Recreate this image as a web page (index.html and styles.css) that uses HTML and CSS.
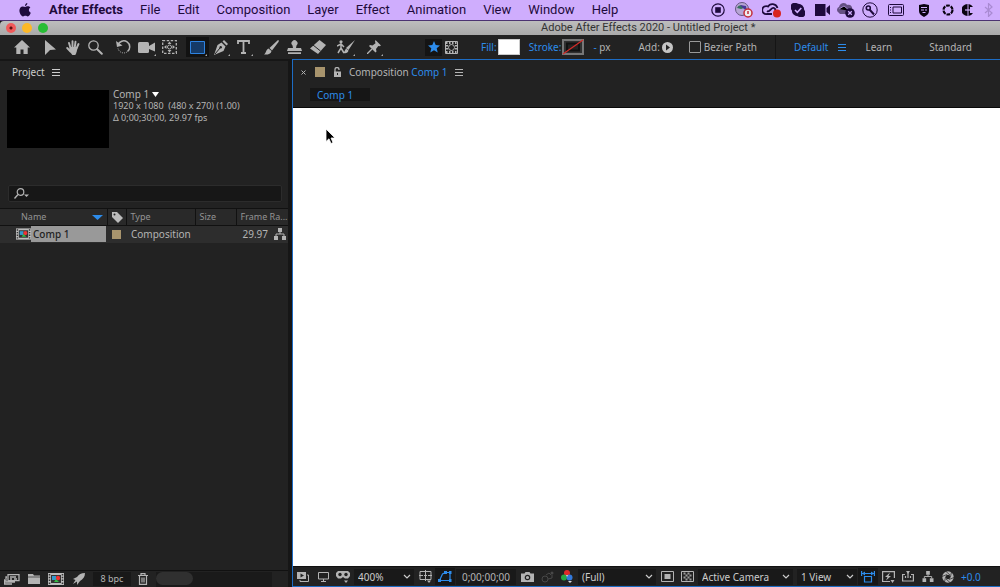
FILE: index.html
```html
<!DOCTYPE html>
<html lang="en">
<head>
<meta charset="utf-8">
<title>Adobe After Effects 2020 - Untitled Project</title>
<link rel="stylesheet" href="styles.css">
</head>
<body>
<svg class="defs" aria-hidden="true">
  <symbol id="film" viewBox="0 0 16 12"><path fill="#bbb" d="M0 0h16v12H0z"/><path fill="#333" d="M3 2h10v8H3z"/><path stroke="#333" stroke-width="1.5" stroke-dasharray="1.5 1.3" d="M1.5 1v10M14.500 1v10"/><path fill="#39c" d="M4 3h4v4H4z"/><circle cx="10" cy="5" r="2.200" fill="#e33"/><path fill="#3b4" d="M6 9l2-3 3 3z"/></symbol>
  <symbol id="tree" viewBox="0 0 12 12"><path fill="currentColor" d="M4 0h4v4H4zM0 8h4v4H0zM8 8h4v4H8z"/><path fill="none" stroke="currentColor" d="M6 4v2M2 8V6h8v2"/></symbol>
  <symbol id="chevron" viewBox="0 0 8 5"><path fill="none" stroke="currentColor" stroke-width="1.200" d="M1 1l3 3 3-3"/></symbol>
  <symbol id="menu" viewBox="0 0 8 7"><path stroke="currentColor" d="M0 .5h8M0 3.500h8M0 6.500h8"/></symbol>
</svg>

<header class="menubar">
  <svg class="apple" viewBox="0 0 12 14"><path fill="currentColor" d="M8.300 0c.1 1.600-1 2.900-2.300 3C5.900 1.500 7 .2 8.300 0zM6.200 3.900c.6 0 1.400-.7 2.600-.7 1 0 2 .5 2.600 1.400-2.200 1.300-1.900 4.200.4 5.100-.6 1.700-1.700 3.700-3 3.700-.9 0-1.300-.6-2.400-.6s-1.500.6-2.400.6C2.400 13.400.4 10.400.4 7.600.4 4.900 2.100 3.400 3.700 3.400c1.100 0 1.900.5 2.500.5z"/></svg>
  <nav class="menus">
    <button class="menu menu-app">After Effects</button><button class="menu">File</button><button class="menu">Edit</button><button class="menu">Composition</button><button class="menu">Layer</button><button class="menu">Effect</button><button class="menu">Animation</button><button class="menu">View</button><button class="menu">Window</button><button class="menu">Help</button>
  </nav>
  <div class="status">
    <span class="st"><svg width="14" height="14" viewBox="0 0 14 14"><circle cx="7" cy="7" r="6.200" fill="none" stroke="currentColor" stroke-width="1.200"/><path fill="currentColor" d="M4.200 4.200h5.600v5.600H4.200z"/></svg></span>
    <span class="st st-l"><svg width="20" height="16" viewBox="0 0 20 16"><circle cx="8" cy="7" r="6.500" fill="#b7a5d5" stroke="#64567f"/><path fill="#38705f" d="M3 6c2-4 6-3 7 0l-3 1z"/><path fill="#47349a" d="M6 3l6 1 1 5-3-2z"/><circle cx="14" cy="11" r="4" fill="#eee" stroke="#c22d3a" stroke-width="1.500"/><path stroke="#c22d3a" stroke-width="1.500" d="M14 9v3"/></svg></span>
    <span class="st st-l"><svg width="20" height="16" viewBox="0 0 20 16"><path fill="none" stroke="currentColor" stroke-width="1.800" d="M10 12H5a4 4 0 1 1 1-7.500C8 1 14 1 15.500 6M5 9c3 2 4-4 7-3 2 1 2 4 0 5"/><circle cx="15" cy="11.500" r="4" fill="#d8231f"/></svg></span>
    <span class="st"><svg width="14" height="14" viewBox="0 0 14 14"><path fill="currentColor" d="M4 0a4 4 0 0 1 3 .8A6 6 0 0 1 13.200 7 4 4 0 0 1 7 13.200 6 6 0 0 1 .8 7 4 4 0 0 1 4 0z"/><path fill="none" stroke="#cfadfd" stroke-width="1.600" d="M4 7l2.300 2.300L10.300 5"/></svg></span>
    <span class="st"><svg width="15" height="12" viewBox="0 0 15 12"><path fill="currentColor" d="M0 0h10.500v12H0zM11.500 4L15 1v10l-3.500-3z"/></svg></span>
    <span class="st"><svg width="18" height="16" viewBox="0 0 18 16"><path fill="#655083" d="M1 10a3 3 0 0 1 1-5C3 0 9 0 10 3c4-1 6 2 5 6l-5 3H3z"/><path stroke="#a186cb" d="M2 7l5-3 6 5"/><circle cx="13" cy="11" r="4.800" fill="#1e0a3c"/><path stroke="#cfadfd" stroke-width="1.300" d="M11.200 9.200l3.600 3.600M14.800 9.200l-3.600 3.600"/></svg></span>
    <span class="st"><svg width="16" height="16" viewBox="0 0 16 16"><circle cx="8" cy="8" r="7.200" fill="none" stroke="currentColor"/><circle cx="6.300" cy="6" r="2" fill="none" stroke="currentColor" stroke-width="1.600"/><path stroke="currentColor" stroke-width="2" d="M7.500 7.500l4.500 5"/></svg></span>
    <span class="st st-l"><svg width="16" height="12" viewBox="0 0 16 12"><rect x=".5" y=".5" width="15" height="11" rx="1" fill="none" stroke="currentColor"/><path fill="none" stroke="currentColor" d="M5 3h8.500v6H5zM2.500 3v1M2.500 5.500v1M2.500 8v1"/></svg></span>
    <span class="st st-l"><svg width="12" height="13" viewBox="0 0 12 13"><path fill="#0a0310" d="M1 1l5-1 5 1v6c0 3-2 4.500-5 6-3-1.500-5-3-5-6z"/><path stroke="#cfadfd" d="M3 3.500h6M3 6h3M7 6h2M4.500 8.500h3"/></svg></span>
    <span class="st st-s"><svg width="12" height="12" viewBox="0 0 12 12"><circle cx="6" cy="6" r="4.500" fill="none" stroke="#0a0310" stroke-width="2.200" stroke-dasharray="3.700 1"/></svg></span>
    <span class="st st-s"><svg width="12" height="12" viewBox="0 0 12 12"><path fill="#0a0310" d="M5.500 0v12A6 6 0 0 1 5.500 0zM6.500 0A6 6 0 0 1 11 3H8v6h3a6 6 0 0 1-4.500 3z"/><path stroke="#cfadfd" stroke-width="1.200" d="M3 6h6"/></svg></span>
    <span class="st st-s"><svg width="9" height="14" viewBox="0 0 9 14"><path fill="none" stroke="#a98ad2" stroke-width="1.200" d="M1 4l7 6-3.500 3.500V.5L8 4l-7 6"/></svg></span>
  </div>
</header>

<div class="titlebar">
  <div class="lights"><button class="light red" aria-label="Close"></button><button class="light yellow" aria-label="Minimize"></button><button class="light green" aria-label="Zoom"></button></div>
  <div class="title">Adobe After Effects 2020 - Untitled Project *</div>
</div>

<div class="toolbar">
  <div class="tools">
    <button class="tool" aria-label="Home"><svg width="16" height="14" viewBox="0 0 16 14"><path fill="currentColor" d="M8 0l8 7.500h-2.300V14H9.500V9.500h-3V14H2.300V7.500H0z"/></svg></button>
  </div>
  <div class="tools">
    <button class="tool" aria-label="Selection"><svg width="12" height="15" viewBox="0 0 12 15"><path fill="currentColor" d="M1 0l11 9.500-6 .5-5 5z"/></svg></button>
    <button class="tool" aria-label="Hand"><svg width="14" height="15" viewBox="0 0 14 15"><path fill="none" stroke="currentColor" stroke-width="1.900" stroke-linecap="round" d="M4.500 8L3 3M6.500 7V1.200M8.800 7l.7-5.200M10.500 8.500L12.500 4M4.500 11.500L1.200 8"/><path fill="currentColor" d="M3.800 7h7.500c0 3.500-.8 6-2 8h-3L3 10.500z"/></svg></button>
    <button class="tool" aria-label="Magnify"><svg width="15" height="15" viewBox="0 0 15 15"><circle cx="5.500" cy="5.500" r="4.700" fill="none" stroke="currentColor" stroke-width="1.300"/><path stroke="currentColor" stroke-width="2" stroke-linecap="round" d="M9.200 9.200l4.600 4.600"/></svg></button>
  </div>
  <div class="tools">
    <button class="tool" aria-label="Rotate"><svg width="15" height="14" viewBox="0 0 15 14"><path fill="none" stroke="currentColor" stroke-width="1.500" d="M2 5a6 6 0 1 1 9.500 6.500"/><path fill="none" stroke="currentColor" stroke-dasharray="1 1" d="M2 8.500a6 6 0 0 0 9 3.500"/><path fill="currentColor" d="M0 1l1 6 5.500-1.500z"/></svg></button>
    <button class="tool more" aria-label="Camera"><svg width="17" height="11" viewBox="0 0 17 11"><rect width="11" height="11" rx="1.500" fill="currentColor"/><path fill="currentColor" d="M11 4l6-3.500v9L11 7z"/></svg></button>
    <button class="tool" aria-label="Pan behind"><svg width="15" height="14" viewBox="0 0 15 14"><path fill="none" stroke="currentColor" stroke-width="1.300" stroke-dasharray="2.500 1.500" d="M.7.700h13.600v12.600H.7z"/><circle cx="7.500" cy="7" r="2" fill="none" stroke="currentColor"/><path fill="currentColor" d="M7.500 1.500l2 2.500h-4zM7.500 12.500l2-2.500h-4zM2 7l2.500-2v4zM13 7l-2.500-2v4z"/></svg></button>
  </div>
  <div class="tools">
    <button class="tool more active" aria-label="Rectangle"><svg width="15" height="13" viewBox="0 0 15 13"><path fill="#153a67" stroke="#2d82e0" d="M.5.5h14v12H.5z"/></svg></button>
    <button class="tool more" aria-label="Pen"><svg width="14" height="15" viewBox="0 0 14 15"><path fill="currentColor" d="M8.500 1.500L10 0l4 4-1.500 1.500zM7.500 2.500l4 4L9.500 11 0 15 3.500 5z"/><path stroke="#222" d="M1 14l5-6"/><circle cx="6.700" cy="7.300" r="1.200" fill="#222"/></svg></button>
    <button class="tool more" aria-label="Type"><svg width="13" height="14" viewBox="0 0 13 14"><path fill="none" stroke="currentColor" stroke-width="1.800" d="M1 4V1h11v3M6.500 1v12M4 13h5"/></svg></button>
  </div>
  <div class="tools">
    <button class="tool" aria-label="Brush"><svg width="15" height="15" viewBox="0 0 15 15"><path fill="currentColor" d="M14 0c1 0 1 1 .5 2L8 10.500 5.500 8zM4.500 8.500L7.500 11c-.5 3-4 4-7.500 3.500 2-1 2-5 4.500-6z"/></svg></button>
    <button class="tool" aria-label="Clone stamp"><svg width="15" height="14" viewBox="0 0 15 14"><path fill="currentColor" d="M5.500 5.500a3 3 0 1 1 4 0L9 8h5l1 3H0l1-3h5zM1 12.300h13V14H1z"/></svg></button>
    <button class="tool" aria-label="Eraser"><svg width="16" height="14" viewBox="0 0 16 14"><path fill="currentColor" d="M9.500 0L16 5 8 14 0 8.500z"/><path stroke="#222" d="M3 5l7.500 6"/></svg></button>
  </div>
  <div class="tools">
    <button class="tool more" aria-label="Roto brush"><svg width="18" height="14" viewBox="0 0 18 14"><circle cx="4" cy="1.800" r="1.600" fill="currentColor"/><path fill="none" stroke="currentColor" stroke-width="1.500" d="M4 4v4l-3 5M4 8l3 5M0 6l4-2 3 3"/><path fill="currentColor" d="M18 0l-6.500 10L9 8zM9 8.500l2.500 2C11 13 9 13.500 6.500 13z"/></svg></button>
  </div>
  <div class="tools">
    <button class="tool more" aria-label="Puppet pin"><svg width="14" height="14" viewBox="0 0 14 14"><path fill="currentColor" d="M8.500 0L14 5.500l-1.500.7-1.200-.2-2.300 3 .5 2.500-1 1L2 6l1-1 2.500.5 3-2.300L8 1.500z"/><path stroke="currentColor" stroke-width="1.300" d="M5 9l-5 5"/></svg></button>
  </div>
  <div class="modes">
    <button class="mode on" aria-label="Creates shape"><svg width="12" height="12" viewBox="0 0 12 12"><path fill="#2d8ceb" d="M6 0l1.700 4 4.300.4-3.300 2.800 1 4.300L6 9.200l-3.700 2.300 1-4.300L0 4.400 4.300 4z"/></svg></button>
    <button class="mode" aria-label="Creates mask"><svg width="13" height="13" viewBox="0 0 13 13"><path fill="#222" stroke="#b4b4b4" d="M.5.5h12v12H.5z"/><path stroke="#b4b4b4" stroke-width="2" stroke-dasharray="1.500 1.500" d="M1 2h11M1 11h11M2 4v6M11 4v6"/><circle cx="6.500" cy="6.500" r="3" fill="#222" stroke="#b4b4b4"/></svg></button>
  </div>
  <div class="paint"><button class="link">Fill:</button><button class="swatch fill" aria-label="Fill color"></button></div>
  <div class="paint"><button class="link">Stroke:</button><button class="swatch" aria-label="Stroke color"><svg width="22" height="16" viewBox="0 0 22 16"><path fill="#303030" stroke="#777" stroke-width="2" d="M1 1h20v14H1z"/><path fill="#222" stroke="#111" stroke-width="2" d="M5 4.500h12v7H5z"/><path stroke="#d52b28" stroke-width="1.200" d="M1 15L21 1"/></svg></button></div>
  <div class="px"><span class="blue">-</span> px</div>
  <div class="add">Add: <button class="play" aria-label="Add"><svg width="11" height="11" viewBox="0 0 11 11"><circle cx="5.500" cy="5.500" r="5.500" fill="#c4c4c4"/><path fill="#222" d="M4 2.500l4 3-4 3z"/></svg></button></div>
  <label class="bezier"><input type="checkbox" class="check">Bezier Path</label>
  <nav class="spaces">
    <button class="space blue">Default</button><button class="space-menu blue" aria-label="Workspace menu"><svg width="8" height="7"><use href="#menu"/></svg></button><button class="space learn">Learn</button><button class="space">Standard</button>
  </nav>
</div>

<main class="work">
  <section class="project">
    <h2 class="tab">Project <svg width="8" height="7"><use href="#menu"/></svg></h2>
    <div class="info">
      <div class="thumb"></div>
      <div class="meta"><div class="name">Comp 1<svg width="7" height="5" viewBox="0 0 7 5"><path fill="#fff" d="M0 0h7L3.500 5z"/></svg></div><div>1920 x 1080&nbsp; (480 x 270) (1.00)</div><div>Δ 0;00;30;00, 29.97 fps</div></div>
    </div>
    <label class="search"><svg width="16" height="11" viewBox="0 0 16 11"><circle cx="6.500" cy="4" r="3.300" fill="none" stroke="currentColor" stroke-width="1.200"/><path stroke="currentColor" stroke-width="1.300" d="M4 6.500L.5 10.500"/><path fill="currentColor" d="M10 6.500h5L12.500 9z"/></svg><input type="search" aria-label="Search project"></label>
    <table class="items">
      <colgroup><col class="c-name"><col class="c-tag"><col class="c-type"><col class="c-size"><col class="c-rate"></colgroup>
      <thead><tr>
        <th><div class="cell">Name<svg width="11" height="5" viewBox="0 0 11 5"><path fill="#2d8ceb" d="M0 0h11L5.500 5z"/></svg></div></th>
        <th><svg class="tag" width="11" height="11" viewBox="0 0 11 11"><path fill="#bbb" d="M0 0h5l6 6-5 5-6-6z"/><circle cx="2.500" cy="2.500" r="1" fill="#222"/></svg></th>
        <th>Type</th><th>Size</th><th>Frame Ra...</th>
      </tr></thead>
      <tbody><tr>
        <td class="td-name"><div class="item"><svg width="15" height="12"><use href="#film"/></svg><span>Comp 1</span></div></td>
        <td><div class="label-color"></div></td><td>Composition</td><td></td>
        <td><div class="rate">29.97<svg width="12" height="12"><use href="#tree"/></svg></div></td>
      </tr></tbody>
    </table>
    <footer class="project-foot">
      <button class="slot" aria-label="Interpret footage"><svg width="16" height="11" viewBox="0 0 16 11"><path fill="none" stroke="currentColor" stroke-width="1.300" d="M4 .700h11v6H4zM3 3H2v5h9M1 6H.6v4H8M6 3h6M6 5h2M10 5h3"/></svg></button>
      <button class="slot" aria-label="New folder"><svg width="12" height="10" viewBox="0 0 12 10"><path fill="currentColor" d="M0 0h5l1 1.500h6V10H0z"/><path stroke="#555" d="M0 3h12"/></svg></button>
      <button class="slot" aria-label="New composition"><svg width="16" height="12"><use href="#film"/></svg></button>
      <button class="slot" aria-label="Project settings"><svg width="13" height="12" viewBox="0 0 13 12"><path fill="currentColor" d="M13 0c-4 0-6 1.500-8 4L1 6l2.500 1L1 11l4-2.500V12l3-4c3-2 5-4 5-8z"/></svg></button>
      <button class="bpc">8 bpc</button>
      <button class="slot" aria-label="Delete"><svg width="10" height="12" viewBox="0 0 10 12"><path fill="none" stroke="currentColor" stroke-width="1.200" d="M0 2.500h10M3 2V.600h4V2M1.500 3v8.400h7V3M4 4.500v5M6 4.500v5"/></svg></button>
      <div class="scroll"><div class="thumbbar"></div></div>
    </footer>
  </section>

  <section class="comp">
    <header class="comp-head">
      <button class="close" aria-label="Close tab"><svg width="5" height="5" viewBox="0 0 5 5"><path stroke="currentColor" d="M.5.5l4 4M4.500.5l-4 4"/></svg></button>
      <span class="chip"></span>
      <button class="lock" aria-label="Lock"><svg width="9" height="10" viewBox="0 0 9 10"><path fill="currentColor" d="M1 4.500h7V10H1z"/><path fill="none" stroke="currentColor" stroke-width="1.300" d="M2 5V2.500a2 2 0 0 1 4 0V3"/><path fill="#222" d="M4 6h1v2H4z"/></svg></button>
      <h2 class="comp-title">Composition <span class="blue">Comp 1</span></h2>
      <svg width="8" height="7"><use href="#menu"/></svg>
    </header>
    <div class="crumbs"><button class="crumb">Comp 1</button></div>
    <div class="viewer"><svg class="cursor" width="11" height="17" viewBox="0 0 11 17"><path stroke="#fff" stroke-width=".8" d="M1 1v12.500l3-2.700 2 4.700 2-.9-2-4.600h4z"/></svg></div>
    <footer class="comp-foot">
      <button class="slot" aria-label="Always preview"><svg width="12" height="10" viewBox="0 0 12 10"><path fill="currentColor" d="M0 0h9v7H0z"/><path fill="#222" d="M3.500 1.500L7 3.500l-3.500 2z"/><path fill="none" stroke="currentColor" d="M10 3h1.500v6.500H3V8"/></svg></button>
      <button class="slot" aria-label="Main viewer"><svg width="11" height="10" viewBox="0 0 11 10"><path fill="none" stroke="currentColor" d="M.5.500h10v6.500H.5zM5.500 7v2.500M3 9.500h5"/></svg></button>
      <button class="slot" aria-label="VR view"><svg width="14" height="12" viewBox="0 0 14 12"><path fill="currentColor" d="M2 0h10l2 2v3l-2 2.500H9L7 6 5 7.500H2L0 5V2z"/><circle cx="4" cy="3.500" r="1.700" fill="#222"/><circle cx="10" cy="3.500" r="1.700" fill="#222"/><path fill="currentColor" d="M8 9.500h4L10 12z"/></svg></button>
      <span class="select w-60"><select aria-label="Magnification"><option>400%</option></select><svg width="8" height="5"><use href="#chevron"/></svg></span>
      <button class="slot" aria-label="Grid and guides"><svg width="13" height="13" viewBox="0 0 13 13"><path fill="none" stroke="currentColor" d="M1 1.500h11v8H1zM6.500 0v4M6.500 7v4M0 5.500h4M9 5.500h4M5 5.500h3M6.500 4v3"/><path fill="currentColor" d="M8 10.500h4L10 13z"/></svg></button>
      <button class="slot dark" aria-label="Mask visibility"><svg width="14" height="11" viewBox="0 0 14 11"><path fill="none" stroke="#2d8ceb" stroke-width="1.200" d="M1.500 9.500L4.500 3 7.500 1.500h4.500v8z"/><path fill="#2d8ceb" d="M0 8h3v3H0zM6 0h3v3H6zM11 0h2.500v3H11zM11 8h2.500v3H11z"/></svg></button>
      <button class="time">0;00;00;00</button>
      <button class="slot" aria-label="Snapshot"><svg width="13" height="10" viewBox="0 0 13 10"><path fill="currentColor" d="M0 1.500h3.500L4.500 0h4l1 1.500H13V10H0z"/><circle cx="6.500" cy="5.500" r="2.200" fill="none" stroke="#222" stroke-width="1.200"/></svg></button>
      <button class="slot faint" aria-label="Show snapshot"><svg width="13" height="12" viewBox="0 0 13 12"><circle cx="4" cy="8" r="3" fill="none" stroke="currentColor"/><path fill="none" stroke="currentColor" d="M5 4l3-2 2 2M7 8l4-1V4"/><circle cx="11" cy="2" r="1.500" fill="currentColor"/></svg></button>
      <button class="slot" aria-label="Channels"><svg width="12" height="13" viewBox="0 0 12 13"><circle cx="6" cy="3" r="3" fill="#e02a2a"/><circle cx="3" cy="7.500" r="3" fill="#27a744"/><circle cx="8.500" cy="7.500" r="3" fill="#3279dc"/><path fill="#ddd" d="M5 5l2 0-1 2zM7 11h4l-2 2z"/></svg></button>
      <span class="select w-80"><select aria-label="Resolution"><option>(Full)</option></select><svg width="8" height="5"><use href="#chevron"/></svg></span>
      <button class="slot" aria-label="Region of interest"><svg width="13" height="11" viewBox="0 0 13 11"><path fill="#222" stroke="currentColor" d="M.5.500h12v10H.5z"/><path fill="currentColor" d="M3.500 3h6v5h-6z"/></svg></button>
      <button class="slot" aria-label="Transparency grid"><svg width="13" height="11" viewBox="0 0 13 11"><path fill="none" stroke="currentColor" d="M.5.500h12v10H.5z"/><path stroke="#999" stroke-width="2" stroke-dasharray="2 2" d="M2.500 2.500h8M2.500 6.500h8M4.500 4.500h7M4.500 8.500h7"/></svg></button>
      <span class="select w-95"><select aria-label="3D view"><option>Active Camera</option></select><svg width="8" height="5"><use href="#chevron"/></svg></span>
      <span class="select w-60 views"><select aria-label="View layout"><option>1 View</option></select><svg width="8" height="5"><use href="#chevron"/></svg></span>
      <button class="slot dark" aria-label="Pixel aspect ratio"><svg width="14" height="12" viewBox="0 0 14 12"><path fill="none" stroke="#2d8ceb" stroke-width="1.200" d="M.6 0v5M13.400 0v5M1 2.500h12M3.500 5.500h7V11h-7z"/><path fill="#2d8ceb" d="M1 2.500L4 .5v4zM13 2.500L10 .5v4z"/></svg></button>
      <button class="slot" aria-label="Fast previews"><svg width="13" height="12" viewBox="0 0 13 12"><path fill="none" stroke="currentColor" stroke-width="1.200" d="M8 10.500H.600V.600h11.800V7"/><path fill="currentColor" d="M8 1.500L3 6h2.500L4 9.500 9 5H6.500zM8.500 9h4l-2 3z"/></svg></button>
      <button class="slot" aria-label="Timeline"><svg width="12" height="11" viewBox="0 0 12 11"><path fill="none" stroke="currentColor" stroke-width="1.200" d="M3 3.500H.6V10h10.800V3.500H9M6 1v6M3.500 5v2M8.500 5v2"/><path fill="currentColor" d="M4 0h4L6 3z"/></svg></button>
      <button class="slot" aria-label="Flowchart"><svg width="12" height="11"><use href="#tree"/></svg></button>
      <button class="slot" aria-label="Reset exposure"><svg width="12" height="12" viewBox="0 0 12 12"><circle cx="6" cy="6" r="4" fill="none" stroke="currentColor" stroke-width="3.400"/><path stroke="#222" stroke-width=".7" d="M3.500 0l4.500 4M9.500 1L8.300 6.500M12 6.500L7 8.500M8.500 12L4 8M2.500 11l1.200-5.500M0 5.500l5-2"/></svg></button>
      <button class="link exposure">+0.0</button>
    </footer>
  </section>
</main>
</body>
</html>
```
FILE: styles.css
```css
* { box-sizing: border-box; }
body {
  margin: 0;
  height: 100vh;
  display: flex;
  flex-direction: column;
  overflow: hidden;
  background: #161616;
  color: #b4b4b4;
  font: 10px/12px "Noto Sans", "Open Sans", sans-serif;
}
button, select, input { font: inherit; color: inherit; }
button { padding: 0; border: 0; background: none; white-space: nowrap; }
h2 { margin: 0; font: inherit; }
svg { flex: none; display: block; }
.defs { position: absolute; width: 0; height: 0; }
.blue, .link { color: #2d8ceb; }

.menubar {
  flex: none;
  height: 21px;
  display: flex;
  align-items: center;
  padding: 0 2px 0 19px;
  background: #cfadfd;
  border-bottom: 1px solid #4b3371;
  color: #1e0a3c;
  font: 13px/20px Roboto, sans-serif;
}
.apple { width: 12px; height: 14px; }
.menus { display: flex; gap: 17px; margin-left: 18px; }
.menu-app { font-weight: 700; }
.status { display: flex; margin-left: auto; }
.st { width: 24px; display: grid; place-items: center; }
.st-l { width: 28px; }
.st-s { width: 20px; }

.titlebar {
  flex: none;
  height: 14px;
  display: flex;
  align-items: center;
  padding-left: 6px;
  background: linear-gradient(#bdbdbd, #a9a9a9);
  border-radius: 4px 0 0 0;
  color: #333;
  font: 11px/14px Roboto, sans-serif;
}
.lights { display: flex; gap: 6px; }
.light { width: 10px; height: 10px; border-radius: 50%; }
.red { background: radial-gradient(circle, #5c1010 1px, #f05a5a 2px); }
.yellow { background: #fdb827; }
.green { background: #27bd35; }
.title { flex: 1; margin-left: 493px; white-space: nowrap; }

.toolbar {
  flex: none;
  height: 24px;
  display: flex;
  align-items: center;
  padding-left: 10px;
  background: #222;
  white-space: nowrap;
}
.tools { display: flex; margin-right: 5px; }
.tool { position: relative; width: 23px; height: 20px; display: grid; place-items: center; }
.more::after {
  content: "";
  position: absolute;
  right: 2px;
  bottom: 1px;
  border: 1px solid #aaa;
  border-top-color: transparent;
  border-left-color: transparent;
}
.active { background: #121212; }
.modes { display: flex; gap: 1px; margin: 0 21px 0 35px; }
.mode { width: 17px; height: 17px; display: grid; place-items: center; }
.on { background: #141414; }
.paint { display: flex; align-items: center; gap: 1px; margin-right: 9px; }
.swatch { width: 22px; height: 16px; }
.fill { background: #fff; border: 1px solid #ccc; }
.add { display: flex; align-items: center; gap: 2px; margin-left: 28px; }
.bezier { display: flex; align-items: center; gap: 3px; margin-left: 16px; }
.check { appearance: none; width: 12px; height: 12px; margin: 0; border: 1px solid #999; border-radius: 1px; }
.spaces { display: flex; align-items: center; margin-left: auto; padding: 0 28px 0 18px; height: 100%; border-left: 1px solid #151515; }
.space-menu { margin: 0 19px 0 10px; }
.learn { margin-right: 37px; }

.work { flex: 1; min-height: 0; display: grid; grid-template-columns: 288px minmax(0, 1fr); gap: 4px; }
.project { display: flex; flex-direction: column; margin-top: 2px; background: #222; min-height: 0; }
.tab { display: flex; align-items: center; gap: 7px; height: 22px; padding-left: 12px; color: #ccc; }
.info { display: flex; gap: 4px; padding: 5px 7px 0; }
.thumb { width: 102px; height: 58px; margin-top: 2px; background: #000; }
.meta { font-size: 9px; }
.name { display: flex; align-items: center; gap: 3px; height: 12px; font-size: 10px; line-height: 12px; }
.search { flex: none; display: flex; align-items: center; height: 17px; margin: 37px 6px 0 8px; padding-left: 5px; background: #171717; border: 1px solid #2c2c2c; border-radius: 2px; }
.search input { flex: 1; min-width: 0; height: 15px; border: 0; padding: 0 4px; background: none; outline: 0; appearance: none; }
.items { width: 100%; margin-top: 6px; border-top: 1px solid #111; border-collapse: collapse; table-layout: fixed; }
.c-name { width: 107px; }
.c-tag { width: 19px; }
.c-type { width: 69px; }
.c-size { width: 41px; }
.items th { height: 17px; padding: 0 0 0 4px; background: #292929; border-right: 1px solid #111; border-bottom: 1px solid #111; color: #949494; font-weight: 400; font-size: 9px; text-align: left; white-space: nowrap; }
.items th:first-child { padding-left: 21px; }
.items th:last-child { border-right: 0; }
.cell { display: flex; align-items: center; justify-content: space-between; padding-right: 4px; }
.items td { height: 17px; padding: 0 0 0 5px; background: #2d2d2d; white-space: nowrap; }
.items .td-name { padding: 0 1px 0 16px; }
.item { display: flex; align-items: center; }
.item span { flex: 1; padding: 0 2px; background: #999; color: #222; line-height: 16px; font-weight: 500; }
.label-color { width: 9px; height: 9px; background: #a8946d; }
.rate { display: flex; align-items: center; justify-content: flex-end; gap: 6px; padding-right: 2px; }
.project-foot { display: flex; align-items: center; height: 17px; margin-top: auto; padding-left: 1px; border-top: 1px solid #111; }
.project-foot .slot { width: 22px; }
.bpc { width: 38px; margin: 0 1px 0 4px; height: 14px; background: #181818; font-size: 9px; }
.scroll { flex: 1; height: 15px; margin: 0 16px 0 2px; background: #1a1a1a; }
.thumbbar { width: 37px; height: 13px; border-radius: 7px; background: #303030; }

.comp { display: flex; flex-direction: column; border: 1px solid #1d6cc4; border-right: 0; background: #222; min-height: 0; }
.comp-head { display: flex; align-items: center; height: 24px; padding-left: 8px; flex: none; }
.close { margin-right: 9px; }
.chip { width: 10px; height: 10px; background: #a8946d; }
.lock { margin: 0 7px 0 8px; }
.comp-title { margin-right: 7px; }
.crumbs { height: 24px; padding: 4px 17px; flex: none; border-bottom: 1px solid #090909; }
.crumb { display: block; width: 60px; height: 13px; padding-left: 7px; background: #161616; color: #2d8ceb; text-align: left; }
.viewer { position: relative; flex: 1; min-height: 0; background: #fff; }
.cursor { position: absolute; left: 32px; top: 20px; }
.comp-foot { flex: none; display: flex; align-items: center; height: 20px; border-top: 1px solid #111; white-space: nowrap; }
.slot { flex: none; width: 20px; height: 17px; display: grid; place-items: center; }
.dark { background: #171717; }
.faint { color: #484848; }
.exposure { margin-left: 3px; }
.select { flex: none; display: grid; align-items: center; height: 16px; margin: 0 1px; background: #191919; color: #ccc; }
.select select, .select svg { grid-area: 1 / 1; }
.select select { width: 100%; height: 16px; padding: 0 4px; border: 0; background: none; appearance: none; outline: 0; }
.select svg { justify-self: end; margin-right: 3px; pointer-events: none; }
.w-60 { width: 60px; }
.w-80 { width: 78px; }
.w-95 { width: 95px; }
.views { margin-left: 3px; }
.time { width: 60px; height: 16px; margin: 0 1px; background: #191919; }
```
